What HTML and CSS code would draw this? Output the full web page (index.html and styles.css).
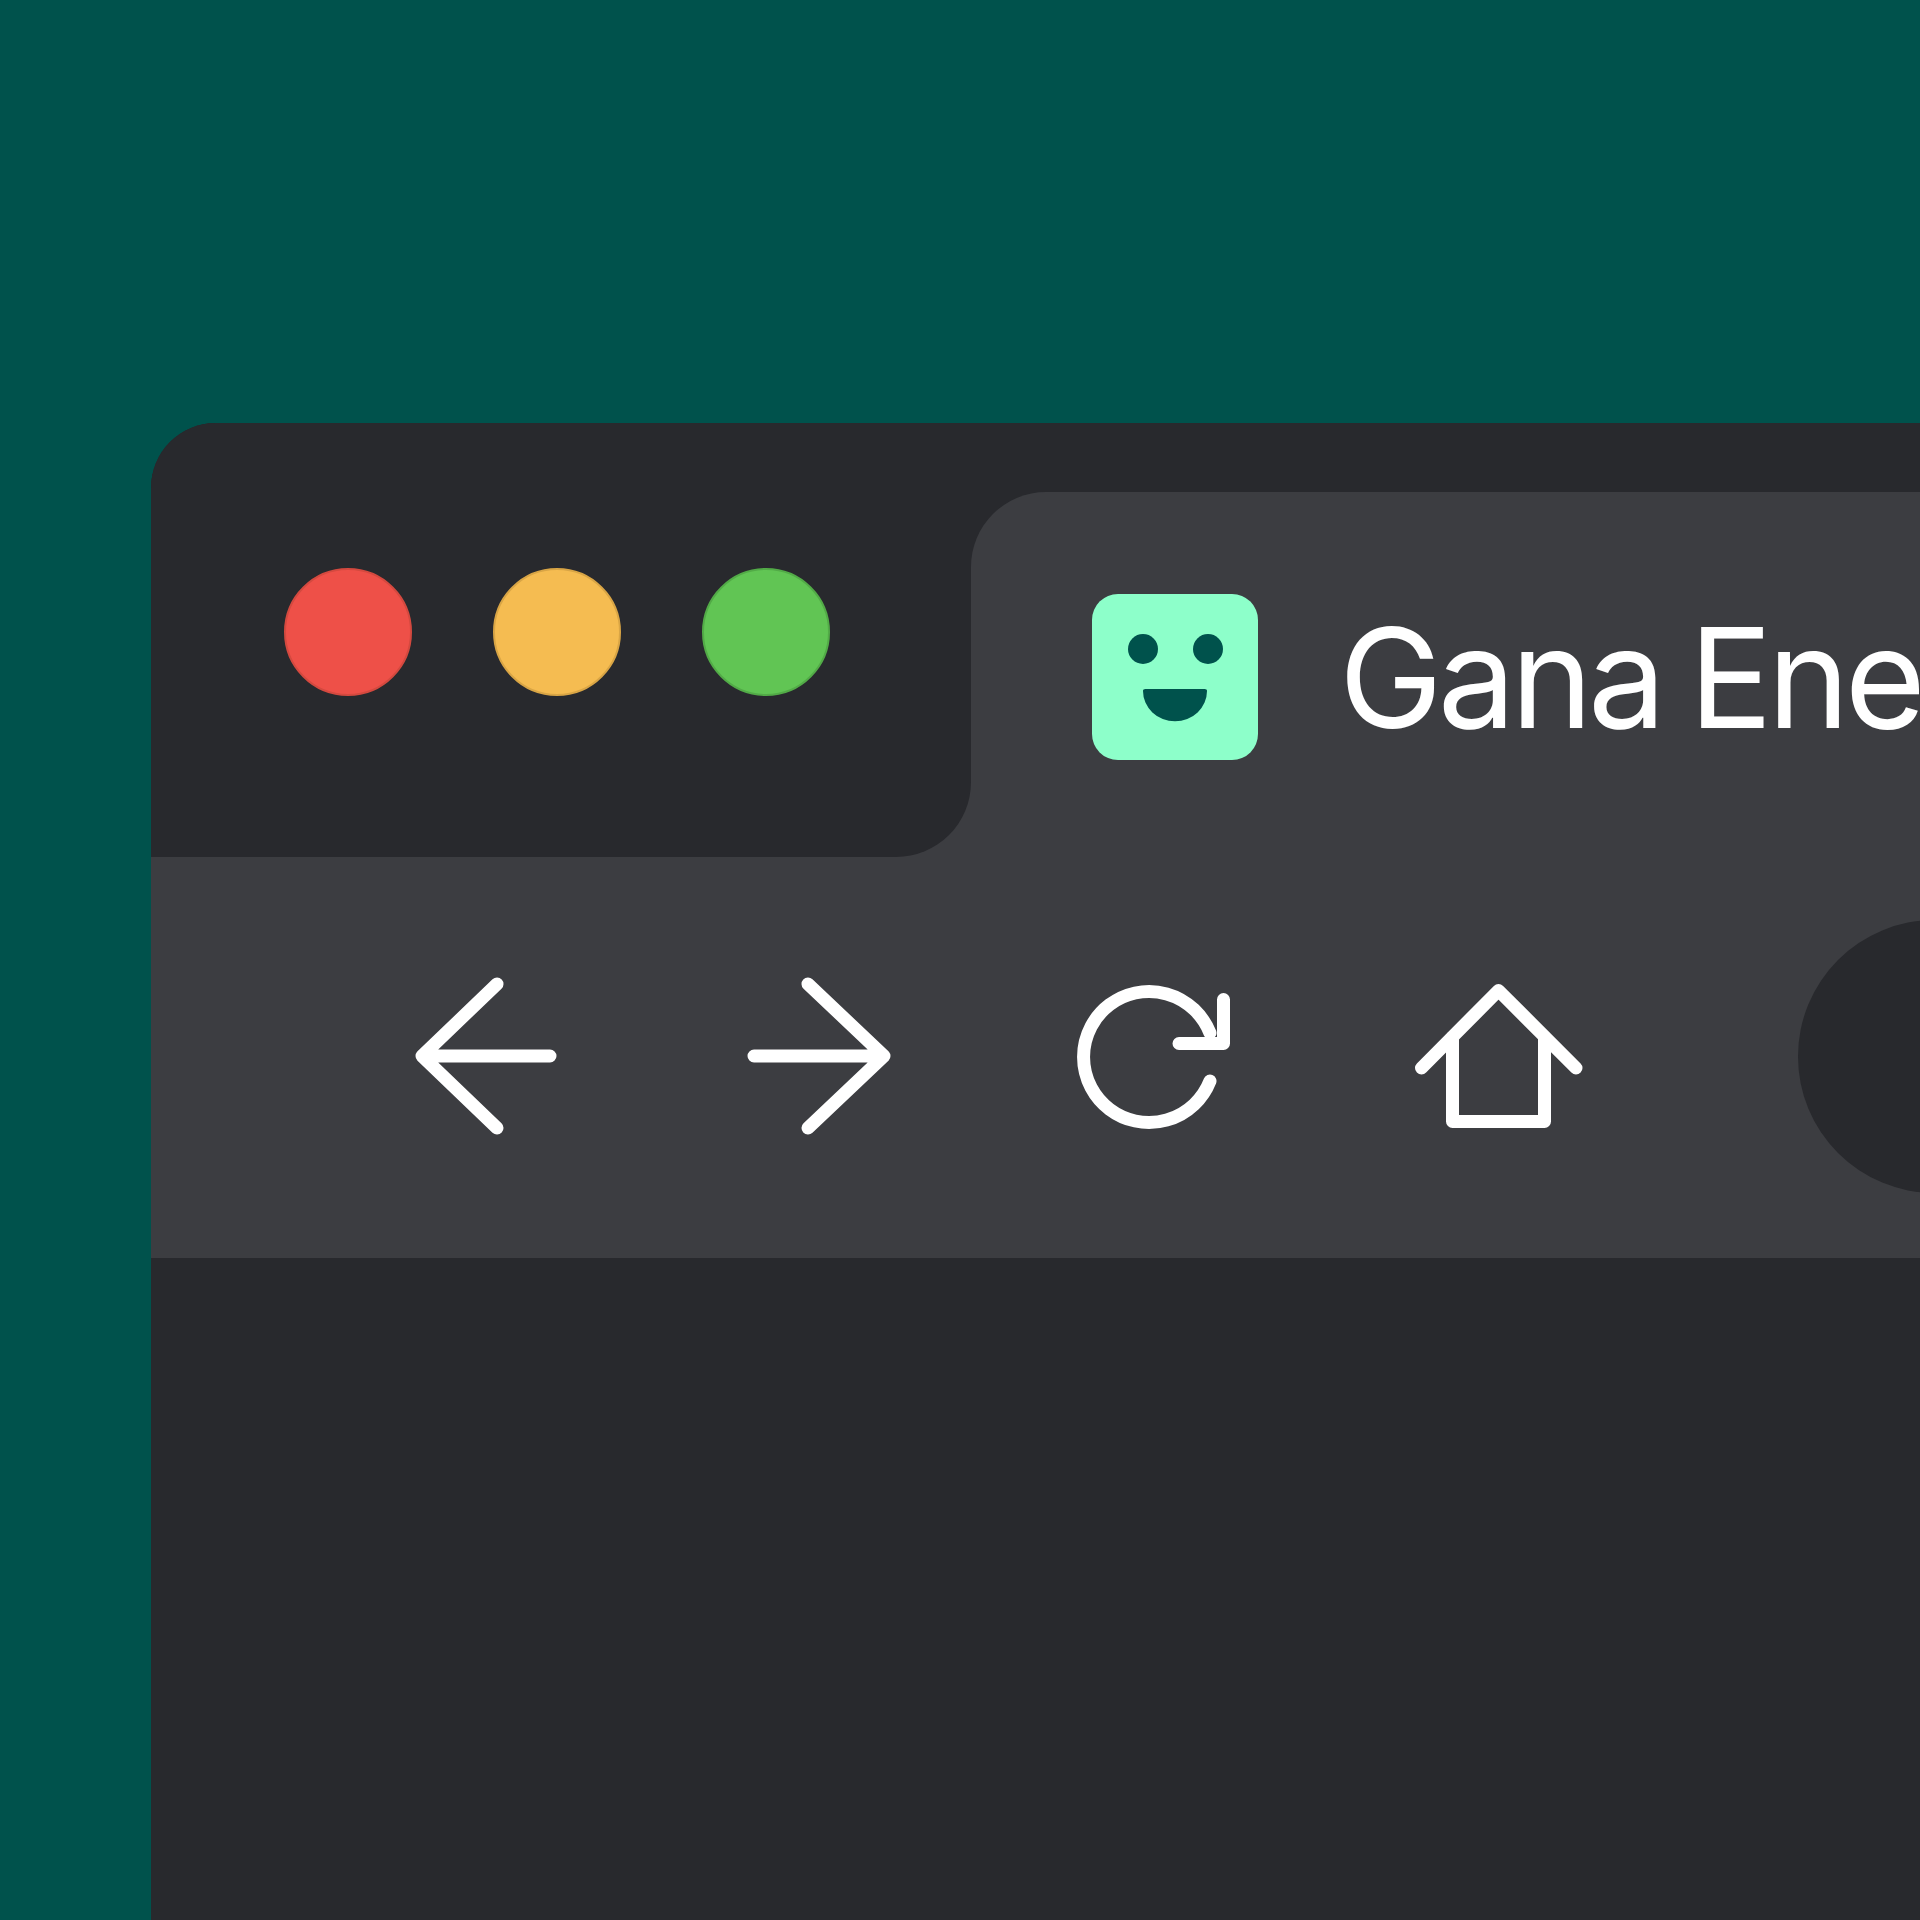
FILE: index.html
```html
<!DOCTYPE html>
<html lang="en">
<head>
    <meta charset="UTF-8">
    <meta name="viewport" content="width=device-width, initial-scale=1.0">
    <title>Gana Ene</title>
    <link rel="stylesheet" href="styles.css">
</head>
<body>
    <div class="window">
        <div class="titlebar">
            <div class="controls">
                <span class="dot dot-red"></span>
                <span class="dot dot-yellow"></span>
                <span class="dot dot-green"></span>
            </div>
            <div class="tab">
                <svg class="logo" viewBox="0 0 166 166">
                    <rect width="166" height="166" rx="26" fill="#8dffca"/>
                    <circle cx="51" cy="55" r="15" fill="#00524c"/>
                    <circle cx="116" cy="55" r="15" fill="#00524c"/>
                    <path d="M53.500 95H112.500Q115.200 95 115 97A32 30.300 0 0 1 51 97Q50.800 95 53.500 95Z" fill="#00524c"/>
                </svg>
                <span class="tab-title">Gana Ene</span>
            </div>
        </div>
        <div class="toolbar">
            <svg class="nav-icon" viewBox="0 0 190 191">
                <path d="M159 95H31M106 23L31 95L106 167"/>
            </svg>
            <svg class="nav-icon" viewBox="0 0 190 191">
                <path d="M29 95H159M83 23L159 95L83 167"/>
            </svg>
            <svg class="nav-icon" viewBox="0 0 190 191">
                <path d="M151 72A65.500 65.500 0 1 0 151 120"/>
                <path d="M164.500 38.500V82.500H120"/>
            </svg>
            <svg class="nav-icon" viewBox="0 0 190 191">
                <path d="M28.500 107L105.500 29.500L183 107"/>
                <path d="M59.500 76V160.500H151.500V76"/>
            </svg>
            <div class="address-bar"></div>
        </div>
        <div class="content"></div>
    </div>
</body>
</html>
```

FILE: styles.css
```css
html, body {
    height: 100%;
}
body {
    margin: 0;
    overflow: hidden;
    background-color: #00524c;
    font-family: Inter, "Liberation Sans", sans-serif;
}
.window {
    display: flex;
    flex-direction: column;
    height: calc(100% - 423px);
    margin: 423px 0 0 151px;
    background-color: #28292d;
    border-top-left-radius: 65px;
    overflow: hidden;
}
.titlebar {
    display: flex;
    height: 434px;
    /* light half shows through the inner corner of .controls */
    background: linear-gradient(#28292d 50%, #3c3d41 50%);
}
.controls {
    display: flex;
    flex-shrink: 0;
    gap: 81px;
    box-sizing: border-box;
    width: 820px;
    padding: 145px 0 0 133px;
    background-color: #28292d;
    border-bottom-right-radius: 75px;
}
.dot {
    width: 128px;
    height: 128px;
    box-sizing: border-box;
    border-radius: 50%;
    border: 2px solid;
}
.dot-red {
    background-color: #ee5048;
    border-color: #d4493f;
}
.dot-yellow {
    background-color: #f5bc51;
    border-color: #d9a545;
}
.dot-green {
    background-color: #61c554;
    border-color: #52ab47;
}
.tab {
    display: flex;
    flex: 1;
    align-items: center;
    gap: 81px;
    margin-top: 69px;
    padding: 5px 0 0 121px;
    background-color: #3c3d41;
    border-top-left-radius: 75px;
    overflow: hidden;
}
.logo {
    flex-shrink: 0;
    width: 166px;
    height: 166px;
}
.tab-title {
    color: #fff;
    font-size: 139px;
    line-height: 1;
    letter-spacing: -5px;
    word-spacing: -6px;
    white-space: nowrap;
}
.toolbar {
    display: flex;
    align-items: center;
    gap: 144px;
    height: 401px;
    box-sizing: border-box;
    padding: 63px 0 65px 240px;
    background-color: #3c3d41;
}
.nav-icon {
    flex-shrink: 0;
    width: 190px;
    height: 191px;
    fill: none;
    stroke: #fff;
    stroke-width: 13;
    stroke-linecap: round;
    stroke-linejoin: round;
}
.address-bar {
    flex-shrink: 0;
    width: 400px;
    height: 273px;
    margin-left: 71px;
    background-color: #28292d;
    border-radius: 137px;
}
.content {
    flex: 1;
}
```
